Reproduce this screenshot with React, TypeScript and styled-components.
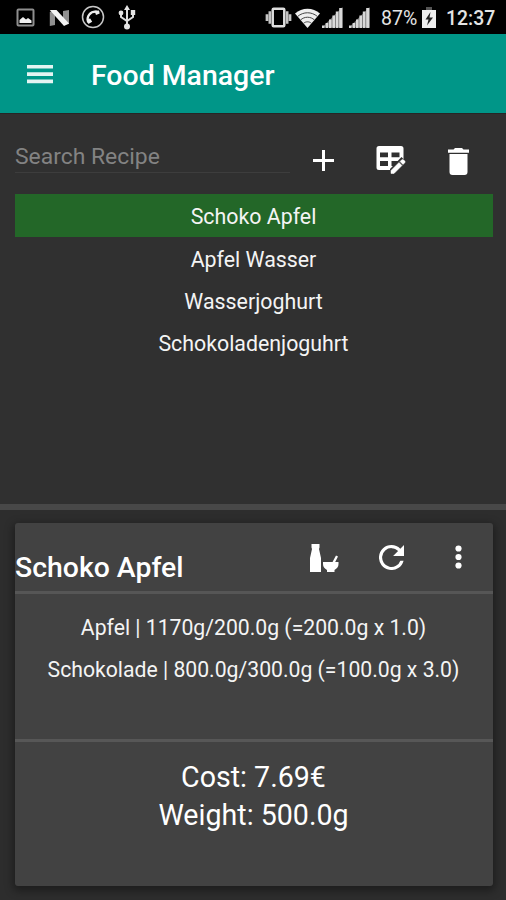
import React from 'react';
import styled, { createGlobalStyle } from 'styled-components';

const Global = createGlobalStyle`
  * { box-sizing: border-box; }
  body { margin: 0; background: #303030; }
`;

const Screen = styled.main`
  width: 506px;
  height: 900px;
  display: flex;
  flex-direction: column;
  overflow: hidden;
  background: #303030;
  color: #fff;
  font-family: Roboto, "Liberation Sans", sans-serif;
`;

const StatusBar = styled.header`
  height: 34px;
  flex: none;
  display: flex;
  align-items: center;
  background: #000;
  padding: 0 10px 0 16px;
`;

const StatusGroup = styled.div<{ $end?: boolean }>`
  display: flex;
  align-items: center;
  margin-left: ${(p) => (p.$end ? 'auto' : '0')};
`;

const Icon = styled.svg<{ $left?: number; $top?: number }>`
  display: block;
  flex: none;
  margin-left: ${(p) => p.$left ?? 0}px;
  margin-top: ${(p) => p.$top ?? 0}px;
`;

const StatusText = styled.span<{ $size: number; $left: number; $width: number; $strong?: boolean }>`
  font-size: ${(p) => p.$size}px;
  font-weight: ${(p) => (p.$strong ? 500 : 400)};
  line-height: 34px;
  width: ${(p) => p.$width}px;
  margin-left: ${(p) => p.$left}px;
  padding-top: 3px;
  white-space: nowrap;
  color: #e4e4e4;
`;

const AppBar = styled.div`
  height: 79px;
  flex: none;
  display: flex;
  background: #009688;
  padding-left: 27px;
`;

const AppTitle = styled.h1`
  margin: 24px 0 0 38px;
  font-size: 28.45px;
  font-weight: 500;
  line-height: 36px;
`;

const RecipePane = styled.section`
  height: 391px;
  flex: none;
  padding: 0 13px 0 15px;
  border-top: 1px solid #262626;
`;

const SearchRow = styled.div`
  height: 80px;
  display: flex;
`;

const SearchInput = styled.input`
  width: 275px;
  height: 35px;
  margin-top: 24px;
  padding: 3px 0 0;
  border: 0;
  border-bottom: 1px solid #3d3d3d;
  outline: 0;
  background: transparent;
  color: #fff;
  font: 400 22.9px Roboto, sans-serif;
  &::placeholder { color: #838383; opacity: 1; }
`;

const IconButton = styled.button`
  display: block;
  align-self: flex-start;
  padding: 0;
  border: 0;
  background: none;
  color: #fff;
`;

const RecipeList = styled.ul`
  margin: 0;
  padding: 0;
  list-style: none;
`;

const RecipeItem = styled.li<{ $active?: boolean }>`
  height: ${(p) => (p.$active ? 43 : 42)}px;
  padding-right: 1px;
  line-height: 45px;
  font-size: 21.35px;
  text-align: center;
  color: #f4f4f4;
  background: ${(p) => (p.$active ? '#236728' : 'transparent')};
`;

const Splitter = styled.div`
  height: 6px;
  flex: none;
  background: #484848;
`;

const DetailPane = styled.section`
  flex: 1;
  padding: 13px 13px 14px 15px;
  background: #2d2d2d;
`;

const Card = styled.article`
  height: 363px;
  border-radius: 3px;
  background: #424242;
  box-shadow: 0 3px 9px 2px rgba(0, 0, 0, 0.36);
`;

const CardHeader = styled.div`
  height: 71px;
  display: flex;
  border-bottom: 3px solid #565656;
`;

const CardTitle = styled.h2`
  width: 295px;
  margin: 27px 0 0;
  font-size: 28.4px;
  font-weight: 500;
  line-height: 36px;
`;

const Ingredients = styled.div`
  height: 148px;
  padding: 13px 1px 0 0;
  border-bottom: 3px solid #575757;
  font-size: 21.2px;
  line-height: 42px;
  text-align: center;
  color: #f4f4f4;
`;

const Totals = styled.div`
  padding: 17px 1px 0 0;
  font-size: 28.6px;
  line-height: 37.5px;
  text-align: center;
`;

const Line = styled.div`
  white-space: nowrap;
`;

const Signal = ({ left }: { left: number }) => (
  <Icon $left={left} width="21" height="21" viewBox="0 0 21 21" fill="#d9d9d9">
    <path d="M0 18.5h2.5V21H0zM3.6 16h2.6v5H3.6zM7 12.5h2.6V21H7zM10.4 8.5H13V21h-2.6zM13.8 4.5h2.6V21h-2.6zM17.2 1h3.2v20h-3.2z" />
    <path d="M0 20.5L20.5 0v20.5z" fillOpacity=".5" />
  </Icon>
);

const recipes = ['Schoko Apfel', 'Apfel Wasser', 'Wasserjoghurt', 'Schokoladenjoguhrt'];

export default function App() {
  return (
    <Screen>
      <Global />
      <StatusBar>
        <StatusGroup>
          <Icon width="19" height="19" viewBox="0 0 19 19" $top={1}>
            <rect x="1.5" y="1.5" width="16" height="16" rx="1" fill="none" stroke="#8e8e8e" strokeWidth="2" />
            <path d="M3.5 15v-3l3.500-3 3 2.500 2-1.500 3.500 2.500V15z" fill="#f0f0f0" />
          </Icon>
          <Icon width="21" height="18" viewBox="0 0 21 18" $left={14} $top={1}>
            <path d="M.8 3L6 1v15l-5.200 1zM14 2l6-1v14l-6 1z" fill="#909090" />
            <path d="M.8 1h6.700L20 14.500 15 17z" fill="#f4f4f4" />
          </Icon>
          <Icon width="24" height="24" viewBox="0 0 24 24" $left={11}>
            <circle cx="12" cy="12" r="10.500" fill="none" stroke="#c8c8c8" strokeWidth="1.500" />
            <path d="M7.200 17.500C5 11 9.500 6 16 6.800" fill="none" stroke="#eee" strokeWidth="2.300" />
            <path d="M13.500 5.800l4.500-.3.700 3-3.700 1.400zM5.700 14.300l3.500-.8 2 3.200-3.800 2.200z" fill="#eee" />
          </Icon>
          <Icon width="18" height="25" viewBox="0 0 18 25" $left={13} $top={1} fill="none" stroke="#ddd" strokeWidth="2">
            <path d="M9 4v18M3 8v4l6 4 6-4V8" />
            <g fill="#e4e4e4" stroke="none">
              <circle cx="9" cy="21.500" r="3" />
              <path d="M9 0l3 5H6z" />
              <circle cx="3" cy="8" r="2.400" />
              <path d="M12.800 5h4.400v5h-4.400z" />
            </g>
          </Icon>
        </StatusGroup>
        <StatusGroup $end>
          <Icon width="27" height="21" viewBox="0 0 28 21" $top={1}>
            <rect x="8" y="1.500" width="12" height="18" rx="1" fill="none" stroke="#dedede" strokeWidth="2.600" />
            <path d="M5 4v13M23 4v13M2 7v7M26 7v7" stroke="#c4c4c4" strokeWidth="2.700" />
          </Icon>
          <Icon width="25" height="20" viewBox="0 0 25 20" $left={3} $top={1}>
            <path d="M0 5.500C7-.8 18-.8 25 5.500L12.500 20z" fill="#eee" />
            <path d="M2.500 8.500c6-5 14-5 20 0M5.500 12c4-3.700 10-3.700 14 0M8.500 15.300c2.500-2 5.500-2 8 0" fill="none" stroke="#444" strokeWidth="1" />
          </Icon>
          <Signal left={2} />
          <Signal left={6} />
          <StatusText $size={19.5} $left={11} $width={37}>87%</StatusText>
          <Icon width="14" height="21" viewBox="0 0 14 21" $left={4}>
            <path d="M4 0h6v3H4z" fill="#555" />
            <path d="M0 3h14v18H0z" fill="#eee" />
            <path d="M8.500 5L3.500 12.500h3L5 18.500l6-8H7.500z" fill="#222" />
          </Icon>
          <StatusText $size={19.4} $left={10} $width={50} $strong>12:37</StatusText>
        </StatusGroup>
      </StatusBar>

      <AppBar>
        <IconButton aria-label="Menu">
          <Icon width="26" height="19" viewBox="0 0 26 19" $top={31} fill="#e4f4f2">
            <path d="M0 0h26v3.600H0zM0 7.300h26v3.600H0zM0 14.600h26v3.600H0z" />
          </Icon>
        </IconButton>
        <AppTitle>Food Manager</AppTitle>
      </AppBar>

      <RecipePane>
        <SearchRow>
          <SearchInput placeholder="Search Recipe" aria-label="Search Recipe" />
          <IconButton aria-label="Add">
            <Icon width="21" height="21" viewBox="0 0 21 21" $left={23} $top={36}>
              <path d="M10.500 0v21M0 10.500h21" stroke="#fff" strokeWidth="3" />
            </Icon>
          </IconButton>
          <IconButton aria-label="Edit">
            <Icon width="30" height="30" viewBox="0 0 30 30" $left={42} $top={31}>
              <path fillRule="evenodd" fill="#fff" d="M3 1h22q2.500 0 2.500 2.500V16L17 25H3Q.5 25 .5 22.500v-19Q.5 1 3 1zM4 7.500v4.700h8V7.500zm11.500 0v4.700h8V7.500zM4 16v5h8v-5zm11.500 0v5h3l5-5z" />
              <path d="M14 29v-5L25.500 12l4 4z" fill="#303030" />
              <path d="M15 25.500l8-8 3 3-8 8h-3zM24 16.500l1.800-1.800q.8-.6 1.600 0l1.400 1.400q.7.800 0 1.600L27 19.500z" fill="#fff" stroke="#fff" strokeWidth=".5" />
            </Icon>
          </IconButton>
          <IconButton aria-label="Delete">
            <Icon width="21" height="27" viewBox="0 0 21 27" $left={42} $top={34} fill="#fff">
              <path d="M0 1.500h5.500L7 0h7l1.500 1.500H21v3.300H0zM1.500 6h18V24q0 3-3 3h-12q-3 0-3-3z" />
            </Icon>
          </IconButton>
        </SearchRow>
        <RecipeList>
          {recipes.map((name, i) => (
            <RecipeItem key={name} $active={i === 0}>{name}</RecipeItem>
          ))}
        </RecipeList>
      </RecipePane>

      <Splitter />

      <DetailPane>
        <Card>
          <CardHeader>
            <CardTitle>Schoko Apfel</CardTitle>
            <IconButton aria-label="Ingredients">
              <Icon width="29" height="28" viewBox="0 0 29 28" $top={21} fill="#fff">
                <path d="M1.500 0h8v3.500L9 5l2 9v14H0V14l2-9-.5-1.500zM13 18h9.500l3.500-6.500 2 1-2.800 5.500H28.500v2c0 3-1.500 4.500-4 6V28h-7.500v-2c-2.500-1.500-4-3-4-6z" />
              </Icon>
            </IconButton>
            <IconButton aria-label="Refresh">
              <Icon width="25" height="25" viewBox="4 4 16 16" $left={40} $top={22} fill="#fff">
                <path d="M17.650 6.350A7.958 7.958 0 0 0 12 4a8 8 0 1 0 7.730 10h-2.080A6 6 0 1 1 12 6c1.660 0 3.140.69 4.220 1.780L13 11h7V4z" />
              </Icon>
            </IconButton>
            <IconButton aria-label="More">
              <Icon width="7" height="24" viewBox="0 0 7 24" $left={51} $top={22} fill="#fff">
                <circle cx="3.500" cy="3.500" r="3.100" />
                <circle cx="3.500" cy="12" r="3.100" />
                <circle cx="3.500" cy="20.500" r="3.100" />
              </Icon>
            </IconButton>
          </CardHeader>
          <Ingredients>
            <Line>Apfel | 1170g/200.0g (=200.0g x 1.0)</Line>
            <Line>Schokolade | 800.0g/300.0g (=100.0g x 3.0)</Line>
          </Ingredients>
          <Totals>
            <Line>Cost: 7.69€</Line>
            <Line>Weight: 500.0g</Line>
          </Totals>
        </Card>
      </DetailPane>
    </Screen>
  );
}
